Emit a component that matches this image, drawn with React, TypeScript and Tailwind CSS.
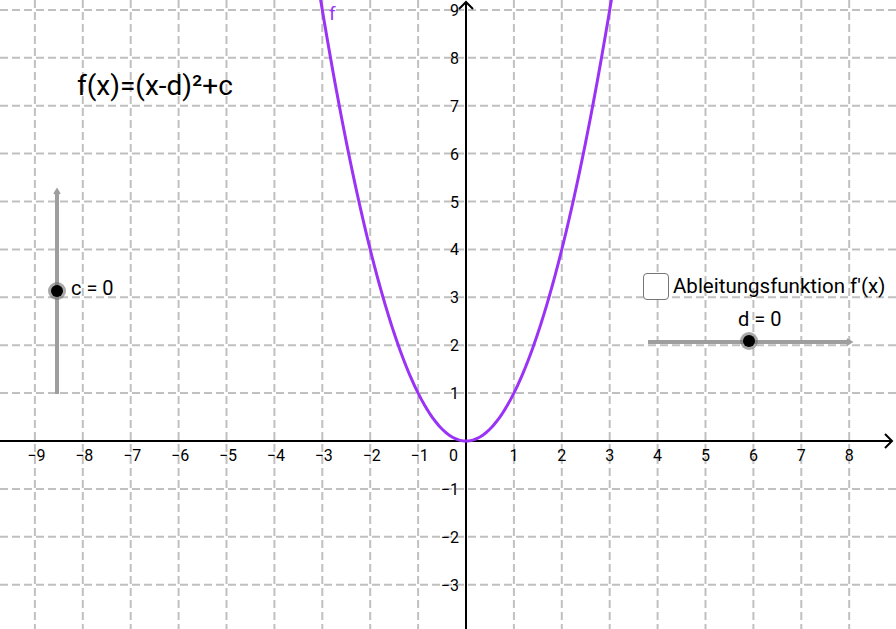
import React from "react";

const OX = 466;
const OY = 441;
const U = 47.9;
const W = 896;
const H = 629;

const sx = (x: number) => OX + x * U;
const sy = (y: number) => OY - y * U;

function parabola(): string {
  const pts: string[] = [];
  const n = 240;
  const a = -3.06;
  const b = 3.06;
  for (let i = 0; i <= n; i++) {
    const x = a + ((b - a) * i) / n;
    pts.push(`${i === 0 ? "M" : "L"}${sx(x).toFixed(2)},${sy(x * x).toFixed(2)}`);
  }
  return pts.join(" ");
}

const FONT = "Roboto, 'Liberation Sans', Arial, sans-serif";

export default function App() {
  const xs: number[] = [];
  for (let k = -9; k <= 9; k++) xs.push(k);
  const ys: number[] = [];
  for (let k = -4; k <= 9; k++) ys.push(k);

  return (
    <div className="relative w-[896px] h-[629px] overflow-hidden bg-white" style={{ fontFamily: FONT }}>
      <svg width={W} height={H} viewBox={`0 0 ${W} ${H}`} className="block">
        {/* grid */}
        <g stroke="#c0c0c0" strokeWidth={2} strokeDasharray="8 4" fill="none">
          {xs.map((k) =>
            k === 0 ? null : <line key={`v${k}`} x1={sx(k)} y1={0} x2={sx(k)} y2={H} />
          )}
          {ys.map((k) =>
            k === 0 ? null : <line key={`h${k}`} x1={0} y1={sy(k)} x2={W} y2={sy(k)} />
          )}
        </g>

        {/* axes */}
        <g stroke="#000" strokeWidth={2} fill="none">
          <line x1={0} y1={OY} x2={892} y2={OY} />
          <polyline points={`885,434 892,441 885,448`} strokeWidth={2} />
          <line x1={OX} y1={H} x2={OX} y2={2} />
          <polyline points={`459,9 466,2 473,9`} strokeWidth={2} />
        </g>

        {/* tick labels */}
        <g fontFamily={FONT} fontSize={16} fill="#000">
          {xs.map((k) => {
            if (k === 0 || k > 8) return null;
            return (
              <text key={`xl${k}`} x={sx(k) + (k < 0 ? 1.5 : 0)} y={461} textAnchor="middle">
                {k < 0 ? `\u2212${-k}` : `${k}`}
              </text>
            );
          })}
          <text x={458} y={461} textAnchor="end">0</text>
          {ys.map((k) => {
            if (k === 0 || k < -3) return null;
            return (
              <text key={`yl${k}`} x={459} y={sy(k) + 6} textAnchor="end">
                {k < 0 ? `\u2212${-k}` : `${k}`}
              </text>
            );
          })}
        </g>

        {/* function */}
        <path d={parabola()} stroke="#9a33f5" strokeWidth={3} fill="none" strokeLinejoin="round" />
        <text x={329} y={20} fontFamily={FONT} fontSize={19} fill="#9a33f5">f</text>

        {/* formula */}
        <text x={77} y={95} fontFamily={FONT} fontSize={28} fill="#000">f(x)=(x-d)²+c</text>

        {/* slider c (vertical) */}
        <line x1={57} y1={394} x2={57} y2={191} stroke="#9e9e9e" strokeWidth={4} />
        <polyline points="54,194 57,189 60,194" stroke="#9e9e9e" strokeWidth={1.5} fill="#9e9e9e" />
        <circle cx={57} cy={291} r={9} fill="#6e6e6e" opacity={0.6} />
        <circle cx={57} cy={291} r={6} fill="#000" />
        <text x={71} y={295} fontFamily={FONT} fontSize={20} fill="#000">c = 0</text>

        {/* slider d (horizontal) */}
        <line x1={648} y1={342} x2={850} y2={342} stroke="#9e9e9e" strokeWidth={4} />
        <polyline points="847,339 852,342 847,345" stroke="#9e9e9e" strokeWidth={1.5} fill="#9e9e9e" />
        <circle cx={749} cy={341} r={9} fill="#6e6e6e" opacity={0.6} />
        <circle cx={749} cy={341} r={6} fill="#000" />
        <text x={738} y={326} fontFamily={FONT} fontSize={20} fill="#000">d = 0</text>
      </svg>

      {/* checkbox */}
      <label className="absolute left-[643px] top-[273px] flex items-center gap-[4px] text-[20.5px] leading-none text-black">
        <span className="block w-[26px] h-[27px] rounded-[4px] border border-[#767676] bg-white" />
        <span className="block">Ableitungsfunktion f′(x)</span>
      </label>
    </div>
  );
}
